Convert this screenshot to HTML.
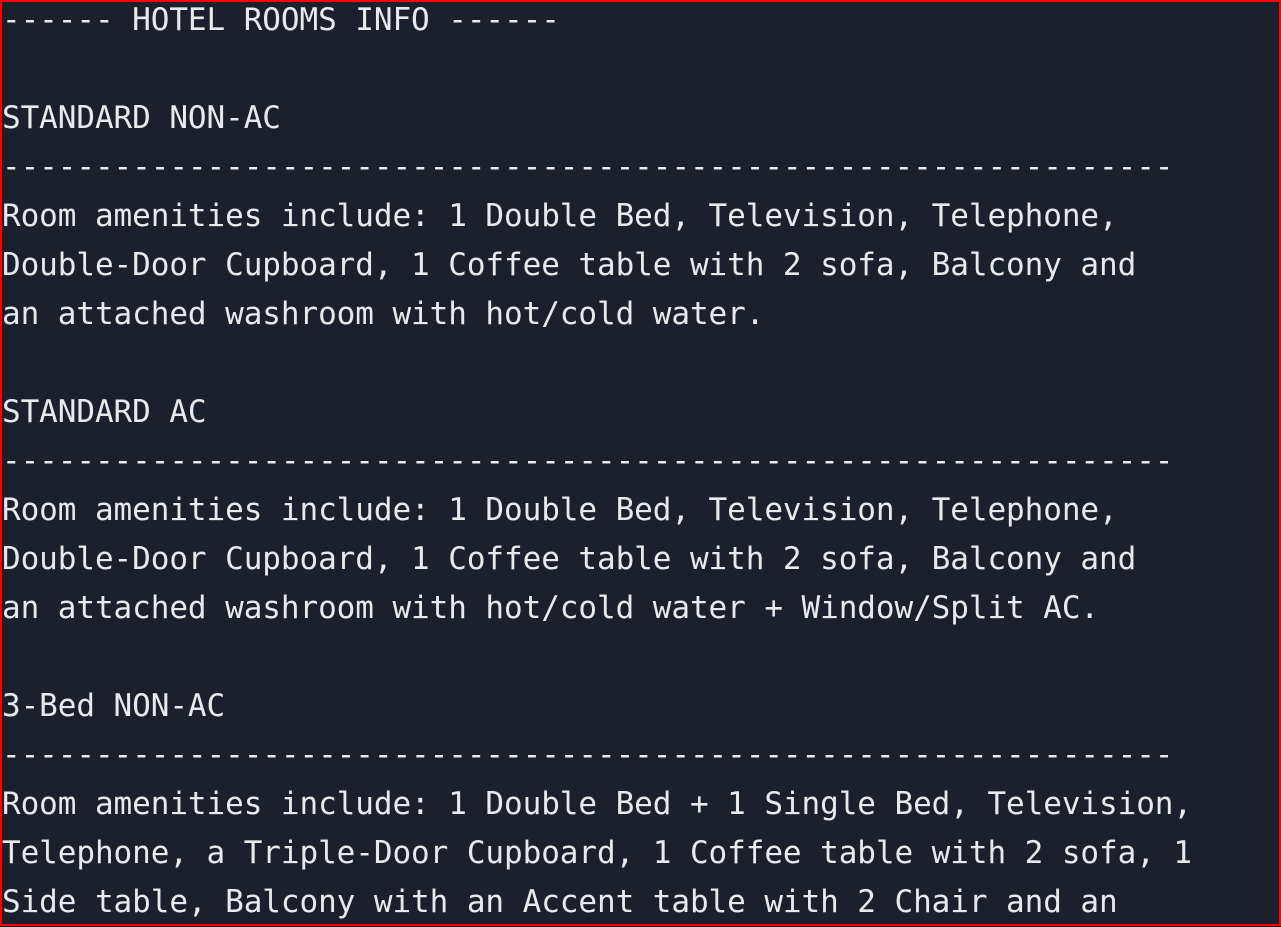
<!DOCTYPE html>
<html><head><style>
html,body{margin:0;padding:0;background:#1c202d;}
body{width:1281px;height:926px;overflow:hidden;position:relative;}
.b{position:absolute;left:0;top:0;width:1277px;height:922px;border:2px solid #ff0000;z-index:2;}
pre{position:absolute;left:2px;top:-4px;margin:0;font-family:"DejaVu Sans Mono","Liberation Mono",monospace;font-size:31px;letter-spacing:-0.07px;line-height:49px;color:#e8e9ec;white-space:pre;}
</style></head><body>
<div class="b"></div>
<pre>------ HOTEL ROOMS INFO ------

STANDARD NON-AC
---------------------------------------------------------------
Room amenities include: 1 Double Bed, Television, Telephone,
Double-Door Cupboard, 1 Coffee table with 2 sofa, Balcony and
an attached washroom with hot/cold water.

STANDARD AC
---------------------------------------------------------------
Room amenities include: 1 Double Bed, Television, Telephone,
Double-Door Cupboard, 1 Coffee table with 2 sofa, Balcony and
an attached washroom with hot/cold water + Window/Split AC.

3-Bed NON-AC
---------------------------------------------------------------
Room amenities include: 1 Double Bed + 1 Single Bed, Television,
Telephone, a Triple-Door Cupboard, 1 Coffee table with 2 sofa, 1
Side table, Balcony with an Accent table with 2 Chair and an
</pre>
</body></html>
